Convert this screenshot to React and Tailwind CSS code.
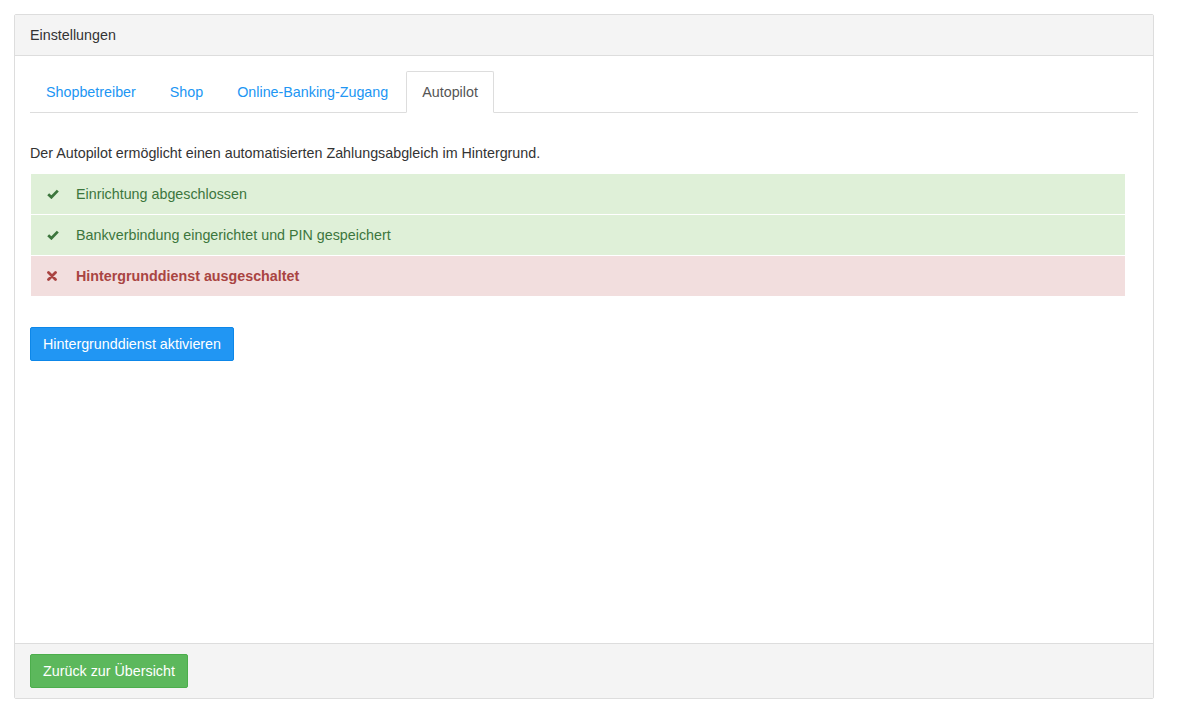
import React from 'react';

const TABS = ['Shopbetreiber', 'Shop', 'Online-Banking-Zugang', 'Autopilot'];

const STATUS = [
  { ok: true, text: 'Einrichtung abgeschlossen' },
  { ok: true, text: 'Bankverbindung eingerichtet und PIN gespeichert' },
  { ok: false, text: 'Hintergrunddienst ausgeschaltet' },
];

function CheckIcon() {
  return (
    <svg width="12" height="10" viewBox="0 0 12 10" fill="none">
      <path d="M1.2 5.2 L4.4 8.2 L10.8 1.6" stroke="currentColor" strokeWidth="2.8" strokeLinejoin="miter" />
    </svg>
  );
}

function TimesIcon() {
  return (
    <svg width="10" height="10" viewBox="0 0 10 10" fill="none">
      <path d="M1.5 1.5 L8.5 8.5 M8.5 1.5 L1.5 8.5" stroke="currentColor" strokeWidth="2.8" strokeLinecap="round" />
    </svg>
  );
}

export default function App() {
  const active = 'Autopilot';

  return (
    <div className="min-h-screen bg-white p-[14px] text-[14.3px] leading-5 text-[#333] font-['Liberation_Sans',Arial,sans-serif]">
      <div className="w-[1140px] border border-[#ddd] rounded-[2px]">
        <div className="bg-[#f4f4f4] border-b border-[#ddd] px-[15px] py-[10px]">Einstellungen</div>

        <div className="h-[587px] px-[15px] pt-[15px]">
          <ul className="flex border-b border-[#ddd]">
            {TABS.map(t => (
              <li key={t} className="-mb-px mr-[2px]">
                <span
                  className={`block px-[15px] py-[10px] border rounded-t-[2px] ${
                    t === active
                      ? 'border-[#ddd] border-b-white bg-white text-[#555]'
                      : 'border-transparent text-[#2196f3]'
                  }`}
                >
                  {t}
                </span>
              </li>
            ))}
          </ul>

          <p className="mt-[30px] mb-[11px]">
            Der Autopilot ermöglicht einen automatisierten Zahlungsabgleich im Hintergrund.
          </p>

          <div className="ml-px mr-[13px] flex flex-col gap-px">
            {STATUS.map(s => (
              <div
                key={s.text}
                className={`h-10 flex items-center pl-4 ${
                  s.ok ? 'bg-[#dff0d8] text-[#3c763d]' : 'bg-[#f2dede] text-[#a94442] font-bold'
                }`}
              >
                <span className="w-[29px] flex">
                  {s.ok ? <CheckIcon /> : <TimesIcon />}
                </span>
                {s.text}
              </div>
            ))}
          </div>

          <button className="mt-[31px] h-[34px] px-3 bg-[#2196f3] border border-[#0d87e9] rounded-[2px] text-white">
            Hintergrunddienst aktivieren
          </button>
        </div>

        <div className="bg-[#f4f4f4] border-t border-[#ddd] px-[15px] py-[10px]">
          <button className="h-[34px] px-3 bg-[#5cb85c] border border-[#4cae4c] rounded-[2px] text-white">
            Zurück zur Übersicht
          </button>
        </div>
      </div>
    </div>
  );
}
